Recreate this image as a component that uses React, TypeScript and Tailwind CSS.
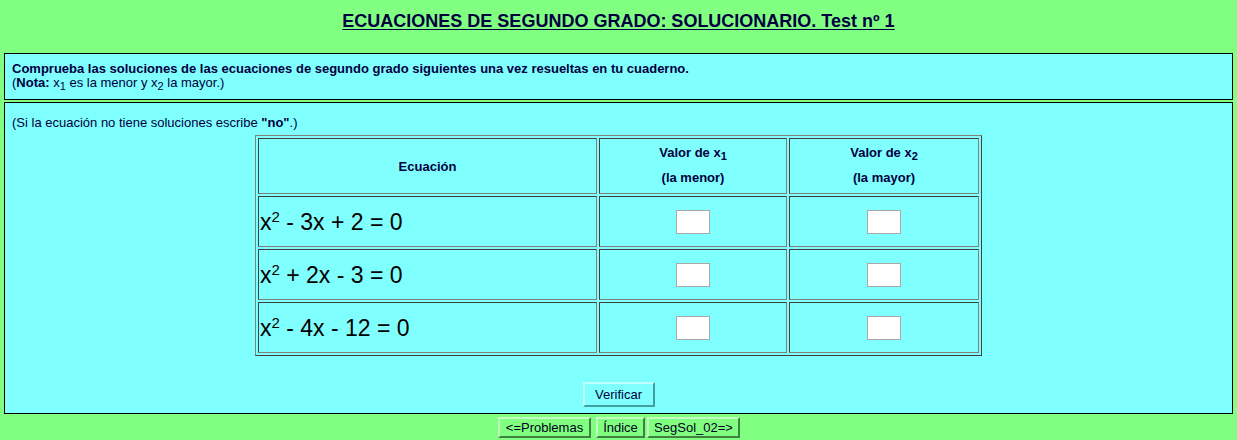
const rows = [
  { a: "- 3x + 2 = 0" },
  { a: "+ 2x - 3 = 0" },
  { a: "- 4x - 12 = 0" },
];

const cell =
  "border border-t-[#404040] border-l-[#404040] border-r-[#808080] border-b-[#808080]";

function Answer() {
  return (
    <input
      type="text"
      className="h-[24px] w-[34px] border border-[#a9a9a9] bg-white px-1 text-[13px] outline-none"
    />
  );
}

export default function App() {
  return (
    <div className="min-h-[440px] bg-[#80ff80] font-['Liberation_Sans',Arial,sans-serif] text-[#000040]">
      <div className="flex h-[53px] justify-center pt-[11px]">
        <h1 className="text-[18px] font-bold leading-[20px] text-[#000040] underline underline-offset-[2px]">
          ECUACIONES DE SEGUNDO GRADO: SOLUCIONARIO. Test nº 1
        </h1>
      </div>

      <div className="mx-[4px] flex flex-col gap-[2px]">
        <div className="h-[47px] border border-black bg-[#80ffff] px-[7px] pt-[8px] text-[13px] leading-[14px]">
          <p className="font-bold">
            Comprueba las soluciones de las ecuaciones de segundo grado siguientes una vez resueltas en tu cuaderno.
          </p>
          <p>
            (<b>Nota:</b> x<sub className="text-[11px]">1</sub> es la menor y x
            <sub className="text-[11px]">2</sub> la mayor.)
          </p>
        </div>

        <div className="flex h-[312px] flex-col border border-black bg-[#80ffff] px-[7px] pt-[12px] text-[13px] leading-[15px]">
          <p>
            (Si la ecuación no tiene soluciones escribe <b>"no"</b>.)
          </p>
          <div className="mt-[5px] flex justify-center">
            <table className="w-[727px] border-separate border-spacing-[2px] border border-t-[#808080] border-l-[#808080] border-r-[#404040] border-b-[#404040]">
              <thead>
                <tr className="h-[56px]">
                  <th className={`w-[339px] ${cell} text-[13px] font-bold`}>Ecuación</th>
                  <th className={`w-[188px] ${cell} text-[13px] font-bold`}>
                    <div className="flex flex-col items-center gap-[10px] pb-[2px]">
                      <span>
                        Valor de x<sub className="text-[11px]">1</sub>
                      </span>
                      <span>(la menor)</span>
                    </div>
                  </th>
                  <th className={`${cell} text-[13px] font-bold`}>
                    <div className="flex flex-col items-center gap-[10px] pb-[2px]">
                      <span>
                        Valor de x<sub className="text-[11px]">2</sub>
                      </span>
                      <span>(la mayor)</span>
                    </div>
                  </th>
                </tr>
              </thead>
              <tbody>
                {rows.map((r) => (
                  <tr key={r.a} className="h-[51px]">
                    <td className={`${cell} pl-[1px] text-[23px] leading-[24px] text-black`}>
                      x<sup className="text-[15px]">2</sup> {r.a}
                    </td>
                    <td className={`${cell} text-center`}>
                      <div className="flex justify-center">
                        <Answer />
                      </div>
                    </td>
                    <td className={`${cell} text-center`}>
                      <div className="flex justify-center">
                        <Answer />
                      </div>
                    </td>
                  </tr>
                ))}
              </tbody>
            </table>
          </div>
          <div className="mt-[26px] flex justify-center">
            <button className="h-[25px] w-[72px] border-2 border-t-[#c0ffff] border-l-[#c0ffff] border-r-[#40a0a0] border-b-[#40a0a0] bg-[#80ffff] text-[13px] text-[#000040]">
              Verificar
            </button>
          </div>
        </div>
      </div>

      <div className="mt-[3px] flex justify-center pl-[1px]">
        <button className="h-[21px] w-[93px] border-2 border-t-[#c0ffc0] border-l-[#c0ffc0] border-r-[#408040] border-b-[#408040] bg-[#80ff80] text-[13px] leading-[15px] text-[#000020]">
          {"<=Problemas"}
        </button>
        <button className="ml-[5px] h-[21px] w-[49px] border-2 border-t-[#c0ffc0] border-l-[#c0ffc0] border-r-[#408040] border-b-[#408040] bg-[#80ff80] text-[13px] leading-[15px] text-[#000020]">
          Índice
        </button>
        <button className="ml-[2px] h-[21px] w-[93px] border-2 border-t-[#c0ffc0] border-l-[#c0ffc0] border-r-[#408040] border-b-[#408040] bg-[#80ff80] text-[13px] leading-[15px] text-[#000020]">
          {"SegSol_02=>"}
        </button>
      </div>
    </div>
  );
}
